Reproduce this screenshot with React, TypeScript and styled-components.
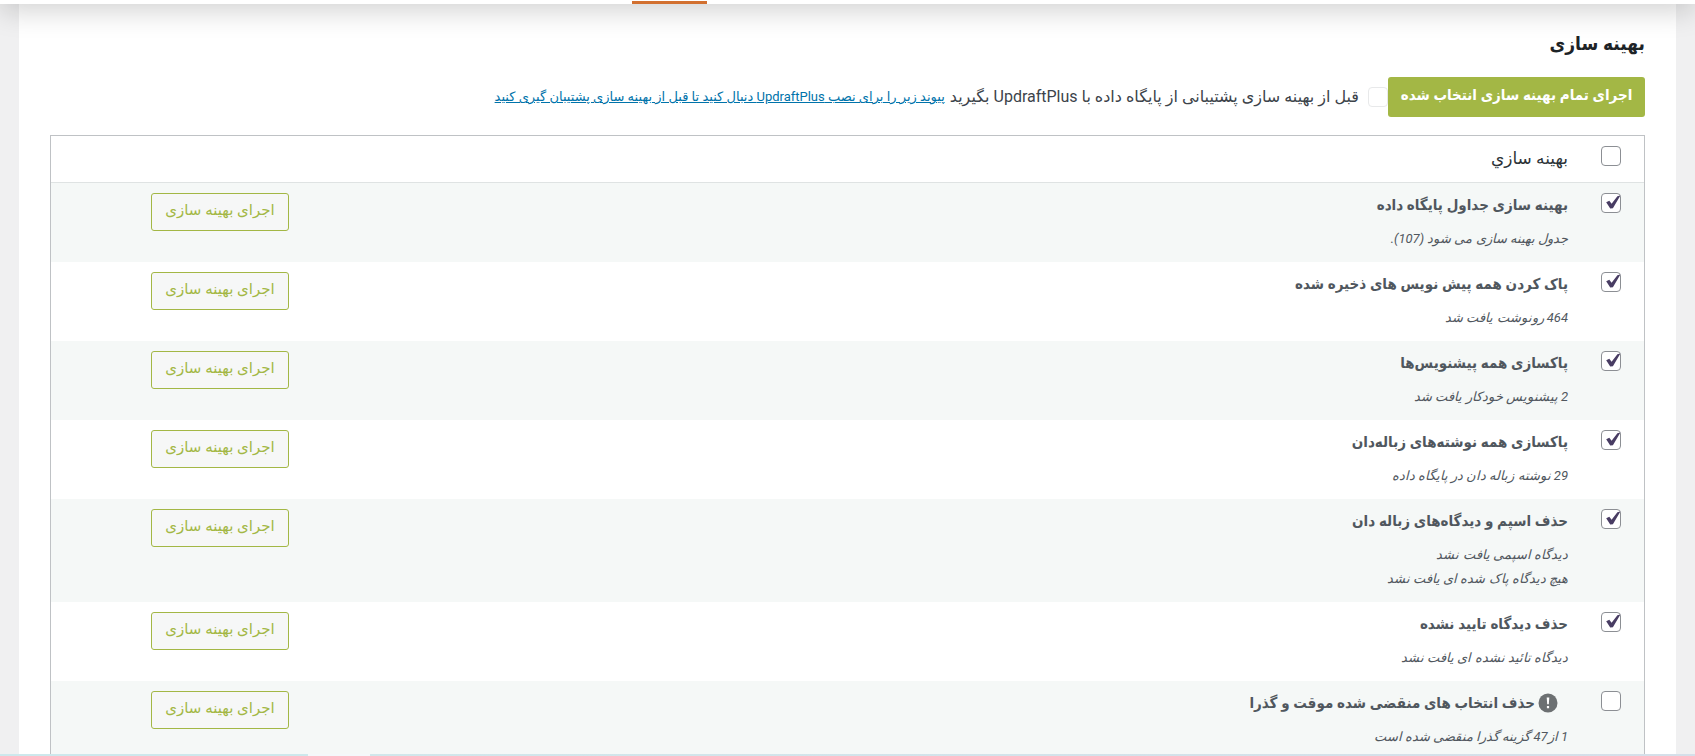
import React, { useId, useState } from "react";
import styled, { createGlobalStyle } from "styled-components";

const condensedStack = `Roboto, "DejaVu Sans Condensed", "DejaVu Sans", sans-serif`;

const GlobalStyle = createGlobalStyle`
  *, *::before, *::after { box-sizing: border-box; }
  body {
    margin: 0;
    background: #f0f0f1;
    color: #3c434a;
    font-family: Roboto, "DejaVu Sans", sans-serif;
    font-size: 15px;
    line-height: 24px;
    overflow: hidden;
  }
  button, input { font-family: inherit; }
`;

const Page = styled.div`
  display: flex;
  flex-direction: column;
  min-height: 100vh;
`;

const TabBar = styled.nav`
  position: relative;
  display: flex;
  align-items: flex-end;
  justify-content: flex-end;
  height: 64px;
  margin-top: -60px;
  padding-left: 632px;
  background: #fff;
  box-shadow: 0 7px 28px rgba(0, 0, 0, 0.18);
  z-index: 1;
`;

const ActiveTab = styled.span`
  width: 75px;
  height: 3px;
  background: #d27030;
`;

const Panel = styled.main`
  flex: 1;
  margin: 0 19px;
  padding: 24px 31px 0;
  background: #fff;
`;

const Heading = styled.h1`
  margin: 0;
  color: #1d2327;
  font-family: ${condensedStack};
  font-size: 19px;
  font-weight: 700;
  line-height: 32px;
`;

const Toolbar = styled.div`
  display: flex;
  align-items: center;
  height: 40px;
  margin: 17px 0 18px;
`;

const RunAll = styled.button`
  min-width: 257px;
  height: 40px;
  padding: 0 12px 4px;
  border: 0;
  border-radius: 3px;
  background: #a3b745;
  color: #fff;
  font-family: ${condensedStack};
  font-size: 15px;
  font-weight: 700;
`;

const BackupLabel = styled.label`
  display: flex;
  align-items: center;
  gap: 9px;
  font-size: 16px;
`;

const HelpLink = styled.a`
  margin-right: 5px;
  color: #0073aa;
  font-size: 13px;
`;

const Table = styled.table`
  width: 100%;
  border: 1px solid #bfc2c5;
  border-collapse: separate;
  border-spacing: 0;
`;

const HeadCell = styled.th<{ $w?: number }>`
  width: ${(p) => (p.$w ? `${p.$w}px` : "auto")};
  height: 47px;
  padding: 10px 0 0;
  border-bottom: 1px solid #dfe3e3;
  color: #2c3338;
  font-size: 17px;
  font-weight: 400;
  text-align: right;
  vertical-align: top;
`;

const Row = styled.tr`
  background: #fff;
  &:nth-child(odd) { background: #f5f8f7; }
`;

const Cell = styled.td`
  padding: 10px 0 11px;
  vertical-align: top;
`;

const CheckSlot = styled.div`
  padding-right: 23px;
`;

const Title = styled.label`
  display: flex;
  align-items: center;
  height: 24px;
  color: #50575e;
  font-family: ${condensedStack};
  font-size: 15px;
  font-weight: 700;
`;

const Details = styled.div`
  padding-top: 10px;
  color: #50575e;
  font-size: 13px;
  font-style: italic;
`;

const Line = styled.p`
  margin: 0;
  line-height: 24px;
`;

const RunOne = styled.button`
  display: block;
  width: 138px;
  height: 38px;
  padding: 0 0 4px;
  border: 1px solid #a3b745;
  border-radius: 3px;
  background: #f6f7f7;
  color: #a3b745;
  font-size: 15px;
`;

const BoxWrap = styled.span`
  display: grid;
  width: 20px;
  height: 20px;
`;

const Box = styled.input<{ $faint?: boolean }>`
  grid-area: 1 / 1;
  appearance: none;
  width: 20px;
  height: 20px;
  margin: 0;
  border: 1px solid ${(p) => (p.$faint ? "#e8e9ea" : "#8c8f94")};
  border-radius: 4px;
  background: #fff;
`;

const Tick = styled.svg`
  grid-area: 1 / 1;
  width: 20px;
  height: 20px;
  pointer-events: none;
`;

const Warning = styled.svg`
  width: 20px;
  height: 20px;
  margin: 0 10px 0 3px;
`;

const StatusStrip = styled.footer`
  position: fixed;
  inset: auto 0 0;
  display: flex;
  height: 2px;
  direction: ltr;
`;

const StripPart = styled.span<{ $fill: string; $w?: number }>`
  flex: ${(p) => (p.$w ? `0 0 ${p.$w}px` : "1")};
  background: ${(p) => p.$fill};
`;

type CheckboxProps = { id?: string; label?: string; initial?: boolean; faint?: boolean };

function Checkbox({ id, label, initial = false, faint }: CheckboxProps) {
  const [checked, setChecked] = useState(initial);
  return (
    <BoxWrap>
      <Box
        id={id}
        type="checkbox"
        aria-label={label}
        $faint={faint}
        checked={checked}
        onChange={(e) => setChecked(e.target.checked)}
      />
      {checked && (
        <Tick viewBox="0 0 20 20" aria-hidden="true">
          <path d="M5.2 9.2 8.3 7.8 10.6 10.8 16.4 3.2 19.4 2.6 11.9 15.2 9.2 15.6Z" fill="#483c63" />
        </Tick>
      )}
    </BoxWrap>
  );
}

type Item = { title: string; lines: string[]; checked: boolean; warn?: boolean };

const items: Item[] = [
  { title: "بهینه سازی جداول پایگاه داده", lines: ["جدول بهینه سازی می شود (107)."], checked: true },
  { title: "پاک کردن همه پیش نویس های ذخیره شده", lines: ["464 رونوشت یافت شد"], checked: true },
  { title: "پاکسازی همه پیشنویس‌ها", lines: ["2 پیشنویس خودکار یافت شد"], checked: true },
  { title: "پاکسازی همه نوشته‌های زباله‌دان", lines: ["29 نوشته زباله دان در پایگاه داده"], checked: true },
  { title: "حذف اسپم و دیدگاه‌های زباله دان", lines: ["دیدگاه اسپمی یافت نشد", "هیچ دیدگاه پاک شده ای یافت نشد"], checked: true },
  { title: "حذف دیدگاه تایید نشده", lines: ["دیدگاه تائید نشده ای یافت نشد"], checked: true },
  { title: "حذف انتخاب های منقضی شده موقت و گذرا", lines: ["1 از47 گزینه گذرا منقضی شده است"], checked: false, warn: true },
];

function OptimizationRow({ item }: { item: Item }) {
  const id = useId();
  return (
    <Row>
      <Cell>
        <CheckSlot>
          <Checkbox id={id} initial={item.checked} />
        </CheckSlot>
      </Cell>
      <Cell>
        <Title htmlFor={id}>
          {item.warn && (
            <Warning viewBox="0 0 20 20" role="img" aria-label="هشدار">
              <circle cx="10" cy="10" r="9.5" fill="#6c7072" />
              <path d="M8.7 4.5h2.6l-.5 6.8H9.2ZM8.9 13h2.2v2.3H8.9Z" fill="#fff" />
            </Warning>
          )}
          {item.title}
        </Title>
        <Details>
          {item.lines.map((line) => (
            <Line key={line}>{line}</Line>
          ))}
        </Details>
      </Cell>
      <Cell>
        <RunOne type="button">اجرای بهینه سازی</RunOne>
      </Cell>
    </Row>
  );
}

export default function App() {
  return (
    <Page dir="rtl">
      <GlobalStyle />
      <TabBar>
        <ActiveTab />
      </TabBar>
      <Panel>
        <Heading>بهینه سازی</Heading>
        <Toolbar>
          <RunAll type="button">اجرای تمام بهینه سازی انتخاب شده</RunAll>
          <BackupLabel>
            <Checkbox faint />
            قبل از بهینه سازی پشتیبانی از پایگاه داده با UpdraftPlus بگیرید
          </BackupLabel>
          <HelpLink href="#updraftplus">
            پیوند زیر را برای نصب UpdraftPlus دنبال کنید تا قبل از بهینه سازی پشتیبان گیری کنید
          </HelpLink>
        </Toolbar>
        <Table>
          <thead>
            <tr>
              <HeadCell $w={76}>
                <CheckSlot>
                  <Checkbox label="انتخاب همه" />
                </CheckSlot>
              </HeadCell>
              <HeadCell scope="col">بهینه سازي</HeadCell>
              <HeadCell $w={238} />
            </tr>
          </thead>
          <tbody>
            {items.map((item) => (
              <OptimizationRow key={item.title} item={item} />
            ))}
          </tbody>
        </Table>
      </Panel>
      <StatusStrip>
        <StripPart $fill="#cde8ec" $w={308} />
        <StripPart $fill="#f4f8fa" $w={62} />
        <StripPart $fill="linear-gradient(90deg, #d1e7eb, #d5dfe9)" />
      </StatusStrip>
    </Page>
  );
}
